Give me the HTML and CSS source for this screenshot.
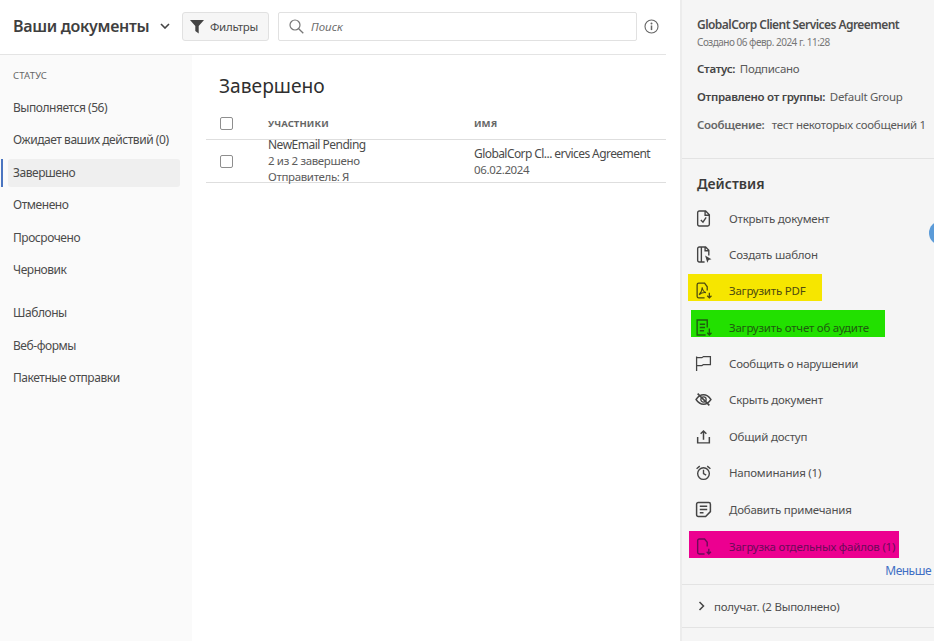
FILE: index.html
```html
<!DOCTYPE html>
<html lang="ru">
<head>
    <meta charset="UTF-8">
    <title>Ваши документы</title>
    <link rel="stylesheet" href="styles.css">
</head>
<body>
    <div class="app">
        <div class="left">
            <header class="topbar">
                <h1>Ваши документы</h1>
                <svg class="caret" width="10" height="6" viewBox="0 0 10 6"><path d="M1 1l4 4 4-4" fill="none" stroke="#444" stroke-width="1.6"/></svg>
                <button class="filter-btn">
                    <svg width="14" height="15" viewBox="0 0 14 15"><path d="M0 1h14L8.7 7v7.5L5.3 12V7z" fill="#444"/></svg>
                    Фильтры
                </button>
                <div class="search">
                    <svg width="15" height="15" viewBox="0 0 15 15"><circle cx="6" cy="6" r="5" fill="none" stroke="#777" stroke-width="1.2"/><path d="M9.7 9.7l4.6 4.6" stroke="#777" stroke-width="1.3"/></svg>
                    <span>Поиск</span>
                </div>
                <svg class="info" width="15" height="15" viewBox="0 0 15 15"><circle cx="7.5" cy="7.5" r="6.5" fill="none" stroke="#666" stroke-width="1.1"/><path d="M7.5 6.5v4.6" stroke="#666" stroke-width="1.5"/><circle cx="7.5" cy="4.4" r="1" fill="#666"/></svg>
            </header>
            <div class="content">
                <nav class="sidebar">
                    <div class="side-title">СТАТУС</div>
                    <a class="side-item">Выполняется (56)</a>
                    <a class="side-item">Ожидает ваших действий (0)</a>
                    <a class="side-item active">Завершено</a>
                    <a class="side-item">Отменено</a>
                    <a class="side-item">Просрочено</a>
                    <a class="side-item">Черновик</a>
                    <a class="side-item gap">Шаблоны</a>
                    <a class="side-item">Веб-формы</a>
                    <a class="side-item">Пакетные отправки</a>
                </nav>
                <main class="main">
                    <h2>Завершено</h2>
                    <div class="table-head">
                        <span class="check"></span>
                        <span class="col-people">УЧАСТНИКИ</span>
                        <span class="col-name">ИМЯ</span>
                    </div>
                    <div class="table-row">
                        <span class="check"></span>
                        <div class="col-people">
                            <div class="name">NewEmail Pending</div>
                            <div>2 из 2 завершено</div>
                            <div>Отправитель: Я</div>
                        </div>
                        <div class="col-name">
                            <div class="name">GlobalCorp Cl... ervices Agreement</div>
                            <div>06.02.2024</div>
                        </div>
                    </div>
                </main>
            </div>
        </div>
        <aside class="panel">
            <section class="details">
                <div class="doc-title">GlobalCorp Client Services Agreement</div>
                <div class="doc-date">Создано 06 февр. 2024 г. 11:28</div>
                <div class="field"><b>Статус:</b> Подписано</div>
                <div class="field"><b>Отправлено от группы:</b> Default Group</div>
                <div class="field muted"><b>Сообщение:</b> &nbsp;тест некоторых сообщений 1</div>
            </section>
            <section class="actions">
                <h3>Действия</h3>
                <a class="action">
                    <svg viewBox="0 0 16 16"><path d="M4 1h6l3.500 3.500V13.500A1.500 1.500 0 0 1 12 15H4a1.500 1.500 0 0 1-1.500-1.500v-11A1.500 1.500 0 0 1 4 1z M5.500 9.500l2 2 3-4.500 M9.500 1v4h4" fill="none" stroke="#444" stroke-width="1.300"/></svg>
                    Открыть документ
                </a>
                <a class="action">
                    <svg viewBox="0 0 16 16"><path d="M4 1h6l3 3v5 M9 15H4a1.500 1.500 0 0 1-1.500-1.500v-11A1.500 1.500 0 0 1 4 1 M6 1v14 M9.500 1v3.500H13" fill="none" stroke="#444" stroke-width="1.300"/><path d="M9.500 9l6 3.500-2.700.7-1.200 2.500z" fill="#444"/></svg>
                    Создать шаблон
                </a>
                <a class="action hl-yellow">
                    <svg viewBox="0 0 16 16"><path d="M11.500 8V4.500L9 1H3.500A1.500 1.500 0 0 0 2 2.500v11A1.500 1.500 0 0 0 3.500 15H9" fill="none" stroke="#4d4a10" stroke-width="1.200"/><path d="M3.800 12c2-2 3-4.500 3-7 .3 3 2 4.500 3.500 5-2-.3-4.500.3-6.500 2z" fill="none" stroke="#4d4a10"/><path d="M13.500 10v5m-2-2l2 2 2-2" fill="none" stroke="#4d4a10" stroke-width="1.200"/></svg>
                    Загрузить PDF
                </a>
                <a class="action hl-green">
                    <svg viewBox="0 0 16 16"><path d="M11.500 8V1H2v14h8 M4.500 5h5 M4.500 8h5 M4.500 11h4" fill="none" stroke="#1f5a10" stroke-width="1.300"/><path d="M13.500 9v6m-2-2l2 2 2-2" fill="none" stroke="#1f5a10" stroke-width="1.300"/></svg>
                    Загрузить отчет об аудите
                </a>
                <a class="action">
                    <svg viewBox="0 0 16 16"><path d="M1.500 1.500V15 M1.500 2.500h5l1.500-1h6.500v7.500H8l-1.500 1h-5" fill="none" stroke="#444" stroke-width="1.200"/></svg>
                    Сообщить о нарушении
                </a>
                <a class="action">
                    <svg viewBox="0 0 16 16"><path d="M1 8c2-3 4.500-4.500 7-4.500S13 5 15 8c-2 3-4.500 4.500-7 4.500S3 11 1 8z" fill="none" stroke="#444" stroke-width="1.300"/><circle cx="8" cy="8" r="2.500" fill="none" stroke="#444" stroke-width="1.200"/><path d="M2.500 2.500l11 11" stroke="#444" stroke-width="1.500"/></svg>
                    Скрыть документ
                </a>
                <a class="action">
                    <svg viewBox="0 0 16 16"><path d="M2.500 8.500V14h11V8.500 M8 11V3 M5.300 5.500L8 2.800l2.700 2.700" fill="none" stroke="#444" stroke-width="1.400"/></svg>
                    Общий доступ
                </a>
                <a class="action">
                    <svg viewBox="0 0 16 16"><circle cx="8" cy="9" r="5.500" fill="none" stroke="#444" stroke-width="1.300"/><path d="M8 5.500V9l2.500 1.500 M1.500 4.500l3-2.500 M14.500 4.500l-3-2.500" fill="none" stroke="#444" stroke-width="1.300"/></svg>
                    Напоминания (1)
                </a>
                <a class="action">
                    <svg viewBox="0 0 16 16"><path d="M10 14.500H3a1.500 1.500 0 0 1-1.500-1.500V3A1.500 1.500 0 0 1 3 1.500h10A1.500 1.500 0 0 1 14.500 3v7z M4.500 5h7 M4.500 8h7 M4.500 11h3.500" fill="none" stroke="#444" stroke-width="1.400"/></svg>
                    Добавить примечания
                </a>
                <a class="action hl-pink">
                    <svg viewBox="0 0 16 16"><path d="M11.500 8V4L9 1H4a1.500 1.500 0 0 0-1.500 1.500v11A1.500 1.500 0 0 0 4 15h5" fill="none" stroke="#6d0a58" stroke-width="1.300"/><path d="M13 10v5m-2-2l2 2 2-2" fill="none" stroke="#6d0a58" stroke-width="1.300"/></svg>
                    Загрузка отдельных файлов (1)
                </a>
                <a class="less">Меньше</a>
            </section>
            <section class="recipients">
                <svg width="7" height="10" viewBox="0 0 7 10"><path d="M1.500 1l4 4-4 4" fill="none" stroke="#444" stroke-width="1.500"/></svg>
                получат. (2 Выполнено)
            </section>
            <span class="blue-dot"></span>
        </aside>
    </div>
</body>
</html>
```
FILE: styles.css
```css
* {
    box-sizing: border-box;
}
html, body {
    height: 100%;
}
body {
    margin: 0;
    background-color: #fff;
    color: #4b4b4b;
    font-family: "Noto Sans", Arial, sans-serif;
    font-size: 12px;
    overflow: hidden;
}
.app {
    display: flex;
    height: 641px;
}
.left {
    width: 680px;
    padding-right: 14px;
    display: flex;
    flex-direction: column;
}
.topbar {
    height: 55px;
    display: flex;
    align-items: center;
    padding: 0 7px 2px 13px;
    border-bottom: 1px solid #e4e4e4;
}
.topbar h1 {
    margin: 0;
    font-size: 16px;
    font-weight: 600;
    letter-spacing: -0.3px;
    color: #3f3f3f;
    width: 147px;
    white-space: nowrap;
}
.caret {
    margin-right: 12px;
}
.filter-btn {
    height: 29px;
    width: 87px;
    display: flex;
    align-items: center;
    gap: 6px;
    padding: 0 7px;
    border: 1px solid #e1e1e1;
    border-radius: 3px;
    background-color: #f6f6f6;
    color: #4b4b4b;
    font-family: inherit;
    font-size: 11.500px;
    letter-spacing: -0.3px;
    margin-right: 9px;
}
.search {
    width: 359px;
    height: 29px;
    display: flex;
    align-items: center;
    gap: 7px;
    padding: 0 10px;
    border: 1px solid #e1e1e1;
    border-radius: 2px;
    color: #6e6e6e;
    font-style: italic;
    font-size: 11.500px;
    margin-right: 7px;
}
.content {
    flex: 1;
    display: flex;
}
.sidebar {
    width: 192px;
    background-color: #fafafa;
    padding-top: 14px;
}
.side-title {
    padding-left: 13px;
    font-size: 9.500px;
    color: #666;
    margin-bottom: 10px;
    letter-spacing: 0.2px;
}
.side-item {
    display: block;
    height: 32.400px;
    line-height: 32.400px;
    padding-left: 13px;
    font-size: 12px;
    letter-spacing: -0.45px;
    white-space: nowrap;
}
.side-item.active {
    position: relative;
    height: 28px;
    line-height: 28px;
    margin: 2px 12px 2.400px 8px;
    padding-left: 5px;
    background-color: #efefef;
    border-radius: 3px;
}
.side-item.active::before {
    content: "";
    position: absolute;
    left: -7px;
    top: 0;
    bottom: 0;
    width: 2px;
    background-color: #4b75c0;
}
.side-item.gap {
    margin-top: 11px;
}
.main {
    flex: 1;
    padding-left: 14px;
}
.main h2 {
    margin: 16px 0 0 13px;
    font-size: 19.200px;
    line-height: 30px;
    font-weight: 400;
    color: #2f2f2f;
}
.table-head, .table-row {
    display: flex;
    border-bottom: 1px solid #dedede;
}
.table-head {
    height: 39px;
    align-items: center;
    padding-top: 7px;
    font-size: 9.500px;
    font-weight: 700;
    letter-spacing: 0.1px;
    color: #666;
}
.table-row {
    height: 43px;
    align-items: center;
    font-size: 11.500px;
    letter-spacing: -0.35px;
    line-height: 16px;
    color: #5c5c5c;
}
.table-row .name {
    color: #4b4b4b;
    font-size: 12px;
}
.check {
    width: 13px;
    height: 13px;
    margin-left: 14px;
    flex: none;
    border: 1px solid #8e8e8e;
    border-radius: 2px;
    background-color: #fff;
}
.col-people {
    width: 206px;
    margin-left: 35px;
    flex: none;
    white-space: nowrap;
}
.table-row .col-people {
    align-self: flex-start;
    margin-top: -3px;
}
.table-row .col-people .name {
    letter-spacing: -0.5px;
}
.col-name {
    white-space: nowrap;
}
.table-row .col-name {
    padding-top: 1px;
}
.table-row .col-name .name {
    letter-spacing: -0.57px;
}
.panel {
    position: relative;
    width: 254px;
    flex: none;
    background-color: #f5f5f5;
    border-left: 2px solid #ececec;
    overflow: hidden;
}
.details {
    height: 159px;
    padding: 16px 0 0 15px;
    border-bottom: 1px solid #e3e3e3;
}
.doc-title {
    font-size: 12px;
    font-weight: 600;
    letter-spacing: -0.55px;
    line-height: 17px;
    white-space: nowrap;
    color: #4d4d4d;
}
.doc-date {
    margin-top: 2px;
    font-size: 10px;
    line-height: 14px;
    letter-spacing: -0.5px;
    color: #777;
}
.field {
    font-size: 11.500px;
    line-height: 16px;
    margin-top: 12px;
    letter-spacing: -0.3px;
    white-space: nowrap;
    color: #5a5a5a;
}
.field b {
    font-weight: 600;
    color: #444;
    margin-right: 2px;
}
.field.muted b {
    color: #666;
}
.actions {
    height: 426px;
    padding-top: 15px;
    border-bottom: 1px solid #e3e3e3;
}
.actions h3 {
    margin: 0 0 0 15px;
    font-size: 14px;
    line-height: 19px;
    height: 27px;
    font-weight: 600;
    color: #3b3b3b;
}
.action {
    display: flex;
    align-items: center;
    height: 27px;
    margin-bottom: 9.400px;
    padding-left: 13px;
    padding-top: 7px;
    font-size: 11.500px;
    letter-spacing: -0.22px;
    color: #4f4f4f;
    white-space: nowrap;
}
.action svg {
    width: 17px;
    height: 17px;
    flex: none;
    margin-right: 17px;
}
.hl-yellow {
    width: 134px;
    margin-left: 6px;
    padding-left: 7px;
    background-color: #f6e600;
    color: #4d4a10;
}
.hl-green {
    width: 194px;
    margin-left: 9px;
    padding-left: 4px;
    background-color: #22e000;
    color: #1f5a10;
}
.hl-pink {
    width: 210px;
    margin-top: 12px;
    margin-left: 7px;
    padding-left: 6px;
    padding-top: 3px;
    margin-bottom: 4px;
    background-color: #ec0090;
    color: #6d0a58;
}
.less {
    display: block;
    text-align: right;
    padding-right: 3px;
    color: #3f6fc4;
    font-size: 12px;
    letter-spacing: -0.5px;
    line-height: 18px;
}
.recipients {
    height: 43px;
    display: flex;
    align-items: center;
    gap: 9px;
    padding-left: 16px;
    border-bottom: 1px solid #e3e3e3;
    font-size: 11.500px;
    letter-spacing: -0.25px;
    color: #4f4f4f;
}
.blue-dot {
    position: absolute;
    left: 247px;
    top: 221px;
    width: 24px;
    height: 24px;
    border-radius: 50%;
    background-color: #5b9bd8;
}
```
